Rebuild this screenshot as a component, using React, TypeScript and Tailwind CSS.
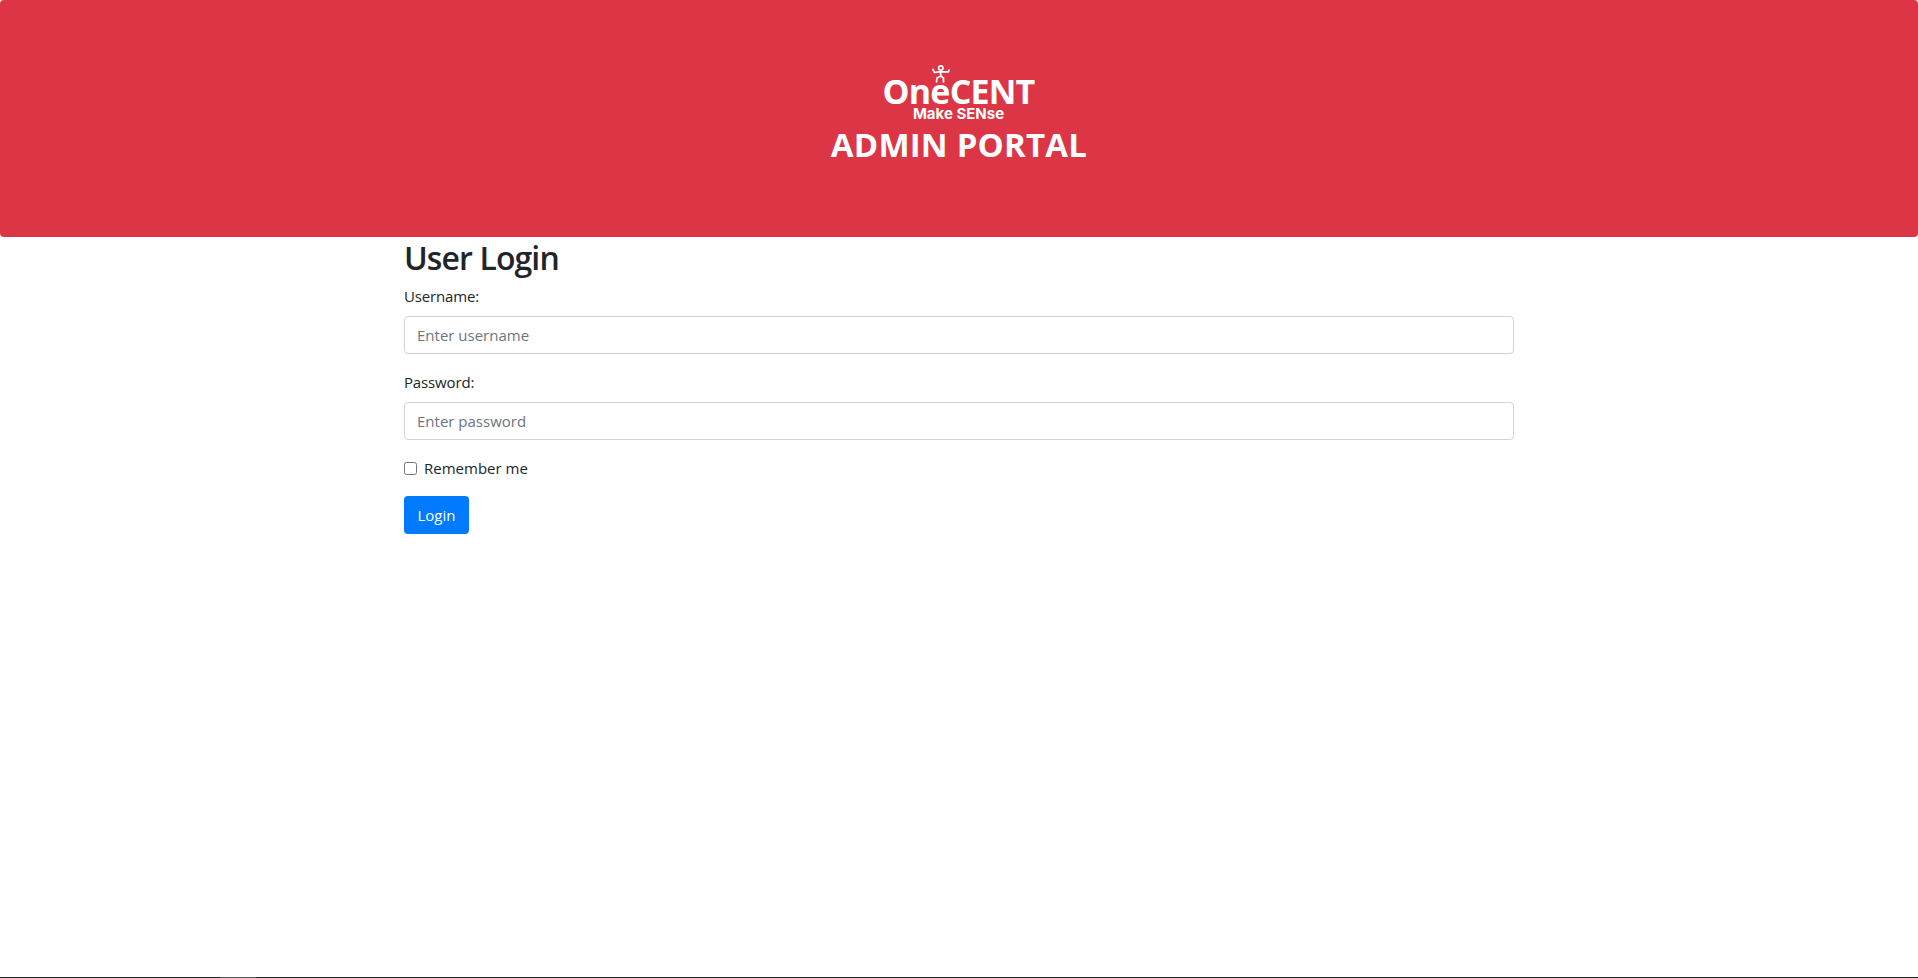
import React from "react";

function Person() {
  return (
    <svg width="18" height="18" viewBox="0 0 18 18" className="absolute left-[48px] top-[3px]" fill="none" stroke="white" strokeWidth="1.7" strokeLinecap="round" strokeLinejoin="round">
      <circle cx="8.8" cy="3" r="2.2" />
      <path d="M1 4.5 L2.5 7.5 L8.5 6.6 L16.5 6.8 M16.5 6.8 L17 5 M8.5 6.6 L8.8 11 M8.8 11 L5 13 L4.5 17 M8.8 11 L11.5 13 L11.5 17" />
    </svg>
  );
}

export default function App() {
  return (
    <div className="min-h-[978px] bg-white flex flex-col font-['Open_Sans',sans-serif] text-[16px] leading-6 text-[#212529]">
      <header className="h-[237px] bg-[#dc3545] rounded-[4px] flex flex-col items-center pt-[62px] text-white">
        <div className="relative w-[150px] h-[60px] flex flex-col items-center">
          <Person />
          <span className="font-bold text-[34px] leading-[36px] mt-[11px] tracking-[-0.8px] -ml-[1px] whitespace-nowrap">OneCENT</span>
          <span className="font-['Inter',sans-serif] font-bold text-[15px] leading-[10px] -ml-[1px] whitespace-nowrap">Make SENse</span>
        </div>
        <h1 className="font-bold text-[33px] leading-[38px] mt-[4px] tracking-[0.2px] whitespace-nowrap">ADMIN PORTAL</h1>
      </header>
      <main className="w-[1110px] mx-auto grow flex flex-col">
        <h2 className="font-semibold text-[32px] leading-[41px] mb-[6px] tracking-[-0.9px]">User Login</h2>
        <div className="flex flex-col mb-[16px]">
          <label className="text-[15px] tracking-[-0.15px] mb-[8px] h-6">Username:</label>
          <input placeholder="Enter username" className="h-[38px] w-full px-3 border border-[#ced4da] rounded-[4px] text-[15px] text-[#495057] placeholder:text-[#6c757d] outline-none" />
        </div>
        <div className="flex flex-col mb-[16px]">
          <label className="text-[15px] tracking-[-0.15px] mb-[8px] h-6">Password:</label>
          <input type="password" placeholder="Enter password" className="h-[38px] w-full px-3 border border-[#ced4da] rounded-[4px] text-[15px] text-[#495057] placeholder:text-[#6c757d] outline-none" />
        </div>
        <label className="flex items-center h-6 mb-[16px] text-[15px]">
          <input type="checkbox" className="w-[13px] h-[13px] m-0 mr-[7px]" />
          Remember me
        </label>
        <button className="w-[65px] h-[38px] bg-[#007bff] text-white rounded-[4px] text-[15px]">Login</button>
      </main>
      <div className="h-px bg-[#222222] flex shrink-0">
        <div className="w-[220px]" />
        <div className="w-[36px] bg-[#555555]" />
      </div>
    </div>
  );
}
